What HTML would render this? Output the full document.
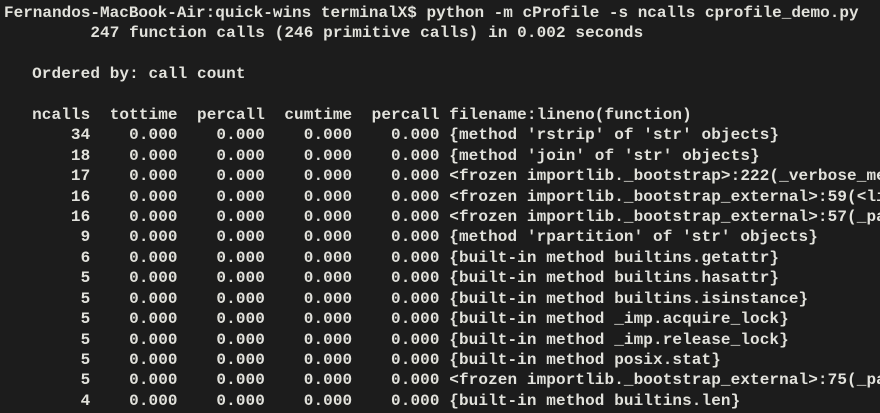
<!DOCTYPE html>
<html><head><style>
html,body{margin:0;padding:0;background:#1c1c1c;width:880px;height:413px;overflow:hidden}
pre{margin:0;padding:3px 0 0 3px;width:877px;height:410px;overflow:hidden;font-family:"Liberation Mono",monospace;font-size:16px;letter-spacing:0.1px;line-height:20.4px;color:#e2e2dc;font-weight:bold;white-space:pre}
.f{letter-spacing:0;margin-left:1px}
</style></head><body><pre><span class="f">Fernandos-MacBook-Air:quick-wins terminalX$ python -m cProfile -s ncalls cprofile_demo.py</span>
         247 function calls (246 primitive calls) in 0.002 seconds

   Ordered by: call count

   ncalls  tottime  percall  cumtime  percall filename:lineno(function)
       34    0.000    0.000    0.000    0.000 {method 'rstrip' of 'str' objects}
       18    0.000    0.000    0.000    0.000 {method 'join' of 'str' objects}
       17    0.000    0.000    0.000    0.000 &lt;frozen importlib._bootstrap&gt;:222(_verbose_message)
       16    0.000    0.000    0.000    0.000 &lt;frozen importlib._bootstrap_external&gt;:59(&lt;listcomp&gt;)
       16    0.000    0.000    0.000    0.000 &lt;frozen importlib._bootstrap_external&gt;:57(_path_join)
        9    0.000    0.000    0.000    0.000 {method 'rpartition' of 'str' objects}
        6    0.000    0.000    0.000    0.000 {built-in method builtins.getattr}
        5    0.000    0.000    0.000    0.000 {built-in method builtins.hasattr}
        5    0.000    0.000    0.000    0.000 {built-in method builtins.isinstance}
        5    0.000    0.000    0.000    0.000 {built-in method _imp.acquire_lock}
        5    0.000    0.000    0.000    0.000 {built-in method _imp.release_lock}
        5    0.000    0.000    0.000    0.000 {built-in method posix.stat}
        5    0.000    0.000    0.000    0.000 &lt;frozen importlib._bootstrap_external&gt;:75(_path_stat)
        4    0.000    0.000    0.000    0.000 {built-in method builtins.len}</pre></body></html>
